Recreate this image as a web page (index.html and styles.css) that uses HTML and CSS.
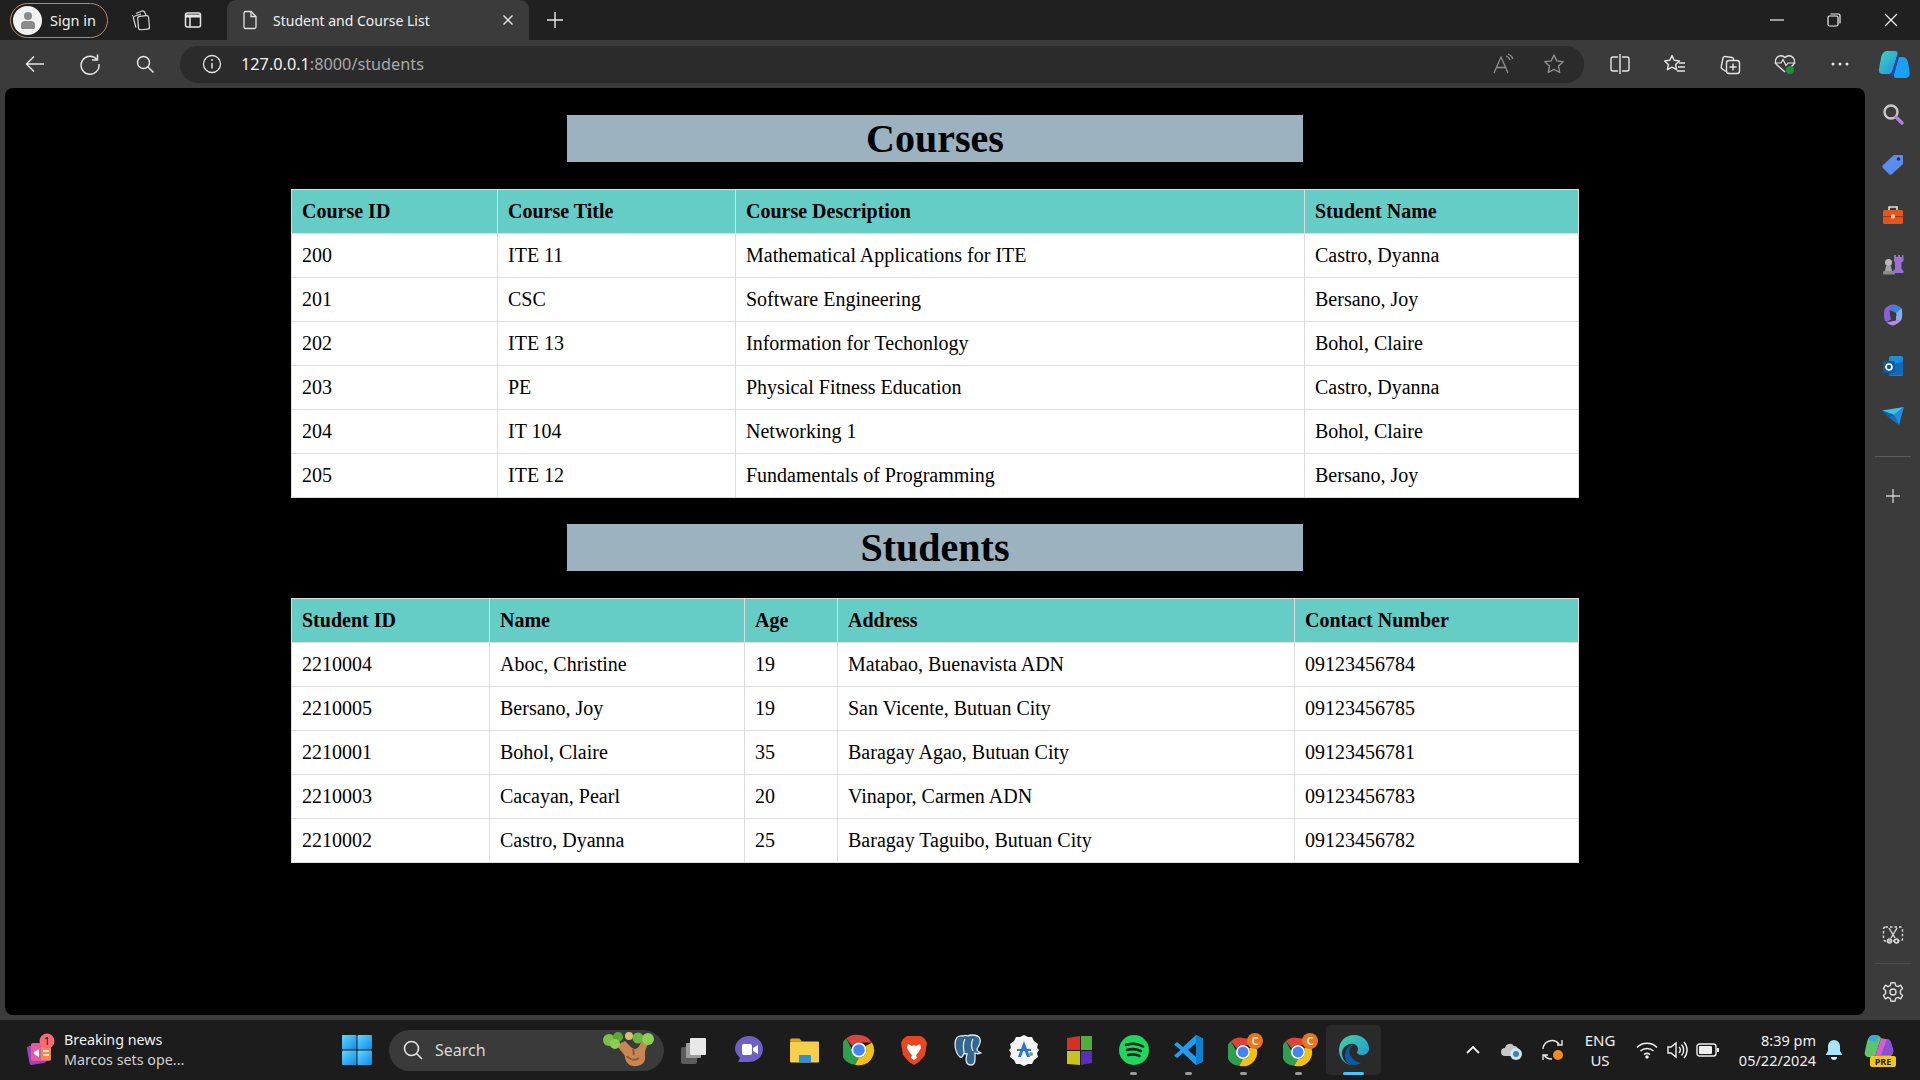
FILE: index.html
```html
<!DOCTYPE html>
<html>
<head>
  <meta charset="UTF-8">
  <title>Student and Course List</title>
  <link rel="stylesheet" href="styles.css">
</head>
<body>

  <svg class="defs" width="0" height="0">
    <symbol id="chrome" viewBox="0 0 32 32">
      <path d="M16 1a15 15 0 0 1 13 7.500H16a7.500 7.500 0 0 0-6.500 3.750L3 4.500A15 15 0 0 1 16 1z" fill="#db4437"/>
      <path d="M3 4.500l6.500 11.250a7.500 7.500 0 0 0 6.500 7.750L12 30.700A15 15 0 0 1 3 4.500z" fill="#2f9e4f"/>
      <path d="M29 8.500A15 15 0 0 1 12 30.700l4-7.200a7.500 7.500 0 0 0 6.500-11.250z" fill="#f4c20d"/>
      <circle cx="16" cy="16" r="7.500" fill="#fff"/>
      <circle cx="16" cy="16" r="5.800" fill="#4285f4"/>
    </symbol>
  </svg>

  <div class="tabstrip">
    <div class="signin">
      <span class="avatar">
        <svg width="24" height="24" viewBox="0 0 24 24"><circle cx="12" cy="8" r="4" fill="#8a8a8a"/><path d="M5 20v-3a4 4 0 0 1 4-4h6a4 4 0 0 1 4 4v3a2 2 0 0 1-2 1H7a2 2 0 0 1-2-1z" fill="#8a8a8a"/></svg>
      </span>
      <span>Sign in</span>
    </div>
    <div class="strip-btn">
      <svg width="22" height="22" viewBox="0 0 22 22" fill="none" stroke="#d8d8d8" stroke-width="1.200"><rect x="8" y="7" width="11" height="13.500" rx="2" transform="rotate(-5 13 13)"/><path d="M6 18.500L3.500 9.500a2 2 0 0 1 1.500-2.500l6-2"/><path d="M3 6.500L2 7"/><path d="M6 4.500l6-2.500a2 2 0 0 1 2.500 1l1.500 3"/></svg>
    </div>
    <div class="strip-btn">
      <svg width="20" height="20" viewBox="0 0 20 20" fill="none" stroke="#e6e6e6" stroke-width="1.500"><rect x="2.500" y="3" width="15" height="14" rx="2"/><path d="M2.500 6h15" stroke-width="3"/><path d="M7 7v10"/></svg>
    </div>
    <div class="tab">
      <svg width="18" height="20" viewBox="0 0 18 20" fill="none" stroke="#e0e0e0" stroke-width="1.300"><path d="M3 3a1.500 1.500 0 0 1 1.500-1.500H10L15 6.500V17a1.500 1.500 0 0 1-1.500 1.500h-9A1.500 1.500 0 0 1 3 17z"/><path d="M10 1.500V6.500H15"/></svg>
      <span class="tab-title">Student and Course List</span>
      <svg class="tab-close" width="12" height="12" viewBox="0 0 12 12" stroke="#e8e8e8" stroke-width="1.400"><path d="M1.500 1.500l9 9M10.500 1.500l-9 9"/></svg>
    </div>
    <div class="strip-btn">
      <svg width="20" height="20" viewBox="0 0 20 20" stroke="#e8e8e8" stroke-width="1.400"><path d="M10 2v16M2 10h16"/></svg>
    </div>
    <div class="win-btns">
      <div class="win-btn"><svg width="14" height="14" viewBox="0 0 14 14" stroke="#f0f0f0" stroke-width="1.200"><path d="M0 7h14"/></svg></div>
      <div class="win-btn"><svg width="14" height="14" viewBox="0 0 14 14" fill="none" stroke="#f0f0f0" stroke-width="1.200"><rect x="1" y="3" width="10" height="10" rx="1.500"/><path d="M3.500 1h8a1.500 1.500 0 0 1 1.500 1.500v8"/></svg></div>
      <div class="win-btn"><svg width="14" height="14" viewBox="0 0 14 14" stroke="#f0f0f0" stroke-width="1.200"><path d="M1 1l12 12M13 1L1 13"/></svg></div>
    </div>
  </div>

  <div class="toolbar">
    <div class="tool">
      <svg width="22" height="22" viewBox="0 0 22 22" fill="none" stroke="#e4e4e4" stroke-width="1.500"><path d="M20 11H2.500M10 3.500L2.500 11l7.500 7.500"/></svg>
    </div>
    <div class="tool">
      <svg width="22" height="22" viewBox="0 0 22 22" fill="none" stroke="#e4e4e4" stroke-width="1.500"><path d="M18 6.500A9 9 0 1 0 20 11"/><path d="M18.500 1.500v5.500h-5.500"/></svg>
    </div>
    <div class="tool">
      <svg width="20" height="20" viewBox="0 0 20 20" fill="none" stroke="#e4e4e4" stroke-width="1.500"><circle cx="8.500" cy="8.500" r="6"/><path d="M13 13l5.500 5.500"/></svg>
    </div>
    <div class="address">
      <svg width="20" height="20" viewBox="0 0 20 20" fill="none" stroke="#e4e4e4" stroke-width="1.300"><circle cx="10" cy="10" r="8.500"/><path d="M10 9v5.500" stroke-width="1.500"/><circle cx="10" cy="6" r="1" fill="#e4e4e4" stroke="none"/></svg>
      <span class="url"><span class="url-host">127.0.0.1</span>:8000/students</span>
      <svg class="read-icon" width="24" height="22" viewBox="0 0 24 22" fill="none" stroke="#8f8f8f" stroke-width="1.300"><path d="M2 20L9 4l7 16M4.500 14.500h9"/><path d="M14 3a6 6 0 0 1 4 4M16 1a9 9 0 0 1 5 5"/></svg>
      <svg class="star-icon" width="22" height="22" viewBox="0 0 22 22" fill="none" stroke="#8f8f8f" stroke-width="1.400"><path d="M11 2l2.800 5.900 6.400.8-4.700 4.400 1.200 6.400L11 16.300l-5.700 3.200 1.200-6.400L1.800 8.700l6.400-.8z" stroke-linejoin="round"/></svg>
    </div>
    <div class="tool tool-first">
      <svg width="22" height="22" viewBox="0 0 22 22" fill="none" stroke="#e4e4e4" stroke-width="1.400"><path d="M9 4H4a2 2 0 0 0-2 2v10a2 2 0 0 0 2 2h5M13 4h5a2 2 0 0 1 2 2v10a2 2 0 0 1-2 2h-5"/><path d="M11 1v20"/></svg>
    </div>
    <div class="tool">
      <svg width="24" height="22" viewBox="0 0 24 22" fill="none" stroke="#e4e4e4" stroke-width="1.400"><path d="M9 2.500l2.200 4.700 5.200.7-3.800 3.600 1 5.200L9 14.100l-4.600 2.600 1-5.200L1.600 7.900l5.200-.7z" stroke-linejoin="round"/><path d="M16 10h6M15 14h7M14 18h8"/></svg>
    </div>
    <div class="tool">
      <svg width="22" height="22" viewBox="0 0 22 22" fill="none" stroke="#e4e4e4" stroke-width="1.400"><path d="M7 18.500L3.500 16a2 2 0 0 1-1.200-2.500L4 5a2 2 0 0 1 2.400-1.500L13 4.500a2 2 0 0 1 1.500 1.500v1"/><rect x="7.500" y="7.500" width="13" height="13" rx="2.500"/><path d="M14 10.500v7M10.500 14h7"/></svg>
    </div>
    <div class="tool">
      <svg width="24" height="22" viewBox="0 0 24 22" fill="none"><path d="M12 19L4 12a5.500 5.500 0 0 1 0-7.500 5.300 5.300 0 0 1 8 0 5.300 5.300 0 0 1 8 0 5.500 5.500 0 0 1 0 7.500l-3 3" stroke="#e4e4e4" stroke-width="1.400"/><path d="M1.500 10H8l2-3.500 3 6 2-2.500h7.500" stroke="#e4e4e4" stroke-width="1.200"/><circle cx="17" cy="17" r="4" fill="#1f8f3d"/></svg>
    </div>
    <div class="tool">
      <svg width="18" height="6" viewBox="0 0 18 6" fill="#e8e8e8"><circle cx="2" cy="3" r="1.500"/><circle cx="9" cy="3" r="1.500"/><circle cx="16" cy="3" r="1.500"/></svg>
    </div>
    <div class="tool tool-last">
      <svg width="32" height="29" viewBox="0 0 32 29">
        <defs><linearGradient id="copleft" x1="0" y1="0" x2="1" y2="1"><stop offset="0" stop-color="#3fd6b8"/><stop offset="1" stop-color="#1e8fe8"/></linearGradient></defs>
        <path d="M18 28h9c3 0 5-2 4.700-5l-1.500-10c-.4-3-2.500-6-5.700-6h-3.500L16 24c-.6 2 .4 4 2 4z" fill="#1aa0f5"/>
        <path d="M9 1h8c2 0 3 1.500 2.500 3.500L14 22c-.5 1.500-2 2-3.500 2H5c-3 0-4.500-2-4-5l2-11c.7-4 3-7 6-7z" fill="url(#copleft)"/>
        <path d="M19.500 4.500L14 22c-.4 1.200-1.200 1.800-2.200 2l5 3c-.9-.8-1.200-1.800-.8-3l4.500-17c.2-.8-.4-1.800-1-2.500z" fill="#1c47b8"/>
      </svg>
    </div>
  </div>

  <div class="frame">
    <main class="page">
      <h2 class="bar-title">Courses</h2>
      <table class="data-table">
        <colgroup>
          <col class="c-id"><col class="c-title"><col class="c-desc"><col>
        </colgroup>
        <thead>
          <tr><th>Course ID</th><th>Course Title</th><th>Course Description</th><th>Student Name</th></tr>
        </thead>
        <tbody>
          <tr><td>200</td><td>ITE 11</td><td>Mathematical Applications for ITE</td><td>Castro, Dyanna</td></tr>
          <tr><td>201</td><td>CSC</td><td>Software Engineering</td><td>Bersano, Joy</td></tr>
          <tr><td>202</td><td>ITE 13</td><td>Information for Techonlogy</td><td>Bohol, Claire</td></tr>
          <tr><td>203</td><td>PE</td><td>Physical Fitness Education</td><td>Castro, Dyanna</td></tr>
          <tr><td>204</td><td>IT 104</td><td>Networking 1</td><td>Bohol, Claire</td></tr>
          <tr><td>205</td><td>ITE 12</td><td>Fundamentals of Programming</td><td>Bersano, Joy</td></tr>
        </tbody>
      </table>

      <h2 class="bar-title">Students</h2>
      <table class="data-table">
        <colgroup>
          <col class="s-id"><col class="s-name"><col class="s-age"><col class="s-addr"><col>
        </colgroup>
        <thead>
          <tr><th>Student ID</th><th>Name</th><th>Age</th><th>Address</th><th>Contact Number</th></tr>
        </thead>
        <tbody>
          <tr><td>2210004</td><td>Aboc, Christine</td><td>19</td><td>Matabao, Buenavista ADN</td><td>09123456784</td></tr>
          <tr><td>2210005</td><td>Bersano, Joy</td><td>19</td><td>San Vicente, Butuan City</td><td>09123456785</td></tr>
          <tr><td>2210001</td><td>Bohol, Claire</td><td>35</td><td>Baragay Agao, Butuan City</td><td>09123456781</td></tr>
          <tr><td>2210003</td><td>Cacayan, Pearl</td><td>20</td><td>Vinapor, Carmen ADN</td><td>09123456783</td></tr>
          <tr><td>2210002</td><td>Castro, Dyanna</td><td>25</td><td>Baragay Taguibo, Butuan City</td><td>09123456782</td></tr>
        </tbody>
      </table>
    </main>

    <aside class="sidebar">
      <div class="side-item">
        <svg width="24" height="24" viewBox="0 0 24 24" fill="none"><circle cx="10" cy="10" r="6.500" stroke="#c9c9c9" stroke-width="2.400"/><path d="M15 15l6 6" stroke="#b57fd6" stroke-width="3.500" stroke-linecap="round"/></svg>
      </div>
      <div class="side-item">
        <svg width="24" height="24" viewBox="0 0 24 24"><path d="M13 3h8a1 1 0 0 1 1 1v8L11 22a2 2 0 0 1-3 0l-6-6a2 2 0 0 1 0-3z" fill="#5b8def"/><circle cx="17.500" cy="7" r="1.800" fill="#17306b"/></svg>
      </div>
      <div class="side-item">
        <svg width="24" height="22" viewBox="0 0 24 22"><path d="M8 6V3h8v3" fill="none" stroke="#e2e2e2" stroke-width="1.600"/><rect x="2" y="6" width="20" height="14" rx="1.500" fill="#e2571e"/><rect x="2" y="12" width="20" height="1.200" fill="#a83a10"/><rect x="10" y="10.500" width="4" height="4" rx="1" fill="#f6c1a6"/></svg>
      </div>
      <div class="side-item">
        <svg width="24" height="24" viewBox="0 0 24 24"><circle cx="7.500" cy="9.500" r="3.500" fill="#b9b9b9"/><path d="M5 13h5l1 5H4z" fill="#a5a5a5"/><rect x="2" y="18" width="12" height="3.500" rx="1" fill="#8a8a8a"/><path d="M13 2h2v2h2V2h2v2h2V2h1.500v6L20.500 9.500V16l2 2v2H12v-2l2-2V9.500L13 8z" fill="#9a6fd6"/></svg>
      </div>
      <div class="side-item">
        <svg width="24" height="24" viewBox="0 0 24 24"><path d="M12 1.500c3 0 7 2 8.500 4 .8 1.200-.5 3-2 3.500l-3 1-7-3z" fill="#3f7fe0"/><path d="M20.500 5.500c1 3 1 8 0 11-.5 1.500-2.500 1-3.500.5l-2 1 .2-8z" fill="#7fb0ee"/><path d="M20.500 16.500c-2 3-6 5.500-8.500 6-2 0-5-1.500-6.500-3l9.500-2z" fill="#b68ae6"/><path d="M3.500 6.500c2-3 5-5 8.500-5L8.500 7.500l1.500 9-4.500 2.500c-2-1-2.500-3-2.500-6 0-3 0-5 .5-6.500z" fill="#8a5fd6"/><path d="M9 8l7 4-6 4z" fill="#3b3b3b"/></svg>
      </div>
      <div class="side-item">
        <svg width="24" height="24" viewBox="0 0 24 24"><rect x="8" y="2" width="14" height="20" rx="1.500" fill="#1a8fdc"/><path d="M8 12l14-5v13a1.500 1.500 0 0 1-1.500 1.500H9.500A1.500 1.500 0 0 1 8 20z" fill="#0f6cbd"/><rect x="2" y="7" width="12" height="12" rx="1.500" fill="#0a5aa5"/><circle cx="8" cy="13" r="3" fill="none" stroke="#fff" stroke-width="1.700"/></svg>
      </div>
      <div class="side-item">
        <svg width="24" height="20" viewBox="0 0 24 20"><path d="M1 4.500L23 1 13 9z" fill="#38c3e8"/><path d="M23 1l-5 18-5-10z" fill="#1f8ee0"/><path d="M13 9l5 10-11-8z" fill="#126fc2"/><path d="M1 4.500L13 9l-6 2z" fill="#0e5fa8"/></svg>
      </div>
      <div class="side-rule"></div>
      <div class="side-item side-plus">
        <svg width="16" height="16" viewBox="0 0 16 16" stroke="#cfcfcf" stroke-width="1.300"><path d="M8 1v14M1 8h14"/></svg>
      </div>
      <div class="side-bottom">
        <div class="side-item">
          <svg width="22" height="22" viewBox="0 0 22 22" fill="none" stroke="#dcdcdc" stroke-width="1.400"><rect x="1.500" y="3" width="19" height="14" rx="2" stroke-dasharray="2.500 2"/><path d="M7 4l6 10M15 4L9 14"/><circle cx="7.500" cy="17" r="2"/><circle cx="14.500" cy="17" r="2"/></svg>
        </div>
        <div class="side-rule side-rule-faint"></div>
        <div class="side-item">
          <svg width="22" height="22" viewBox="0 0 22 22" fill="none" stroke="#dcdcdc" stroke-width="1.400"><circle cx="11" cy="11" r="3"/><path d="M9 1.800h4l.7 2.900 2.300 1 2.600-1.500 2 3.400-2.200 2v2.800l2.200 2-2 3.400-2.600-1.500-2.300 1-.7 2.900H9l-.7-2.900-2.300-1-2.600 1.500-2-3.400 2.200-2V9.600l-2.200-2 2-3.400L6 5.700l2.300-1z" stroke-linejoin="round"/></svg>
        </div>
      </div>
    </aside>
  </div>

  <footer class="taskbar">
    <div class="news">
      <svg class="news-icon" width="34" height="34" viewBox="0 0 34 34">
        <rect x="3" y="12" width="17" height="19" rx="2" fill="#a03fc4" transform="rotate(-10 11 21)"/>
        <rect x="6" y="10" width="20" height="18" rx="2" fill="#e8589a"/>
        <rect x="16" y="14" width="10" height="13" fill="#f08a4b"/>
        <path d="M9 19l5-3v8l-5-3z" fill="#fff"/>
        <path d="M18 18h6M18 22h6" stroke="#fff" stroke-width="1.500"/>
        <circle cx="22" cy="8" r="7.500" fill="#f56a79"/>
        <text x="22" y="12" class="news-badge" text-anchor="middle">1</text>
      </svg>
      <div class="news-text">
        <div class="news-head">Breaking news</div>
        <div class="news-sub">Marcos sets ope...</div>
      </div>
    </div>

    <div class="start">
      <svg width="30" height="30" viewBox="0 0 30 30"><defs><linearGradient id="winfill" x1="0" y1="0" x2="1" y2="1"><stop offset="0" stop-color="#5fd8ff"/><stop offset="1" stop-color="#1489e6"/></linearGradient></defs><rect x="0" y="0" width="14.500" height="14.500" rx="1" fill="url(#winfill)"/><rect x="15.500" y="0" width="14.500" height="14.500" rx="1" fill="url(#winfill)"/><rect x="0" y="15.500" width="14.500" height="14.500" rx="1" fill="url(#winfill)"/><rect x="15.500" y="15.500" width="14.500" height="14.500" rx="1" fill="url(#winfill)"/></svg>
    </div>

    <div class="search-box">
      <svg width="22" height="22" viewBox="0 0 22 22" fill="none" stroke="#e4e4e4" stroke-width="1.600"><circle cx="9.500" cy="9.500" r="7"/><path d="M14.500 14.500l5.500 5.500"/></svg>
      <span class="search-label">Search</span>
      <svg class="search-art" width="56" height="36" viewBox="0 0 56 36">
        <path d="M17 13c3 6 7 8 8 12 .5 6 5 10 12 9 6-1 9-5 8-10-.5-5 1-9 4-13l-7-3c-2 5-4 9-7 9-3 0-6-4-10-8z" fill="#c98652"/>
        <path d="M27 24c3 4 8 5 12 2M33 17l1 6" fill="none" stroke="#8d5a33" stroke-width="2"/>
        <circle cx="9" cy="8" r="6" fill="#7cc04a"/><circle cx="18" cy="5" r="5" fill="#5fa63a"/><circle cx="15" cy="12" r="5" fill="#8ccf55"/>
        <circle cx="38" cy="6" r="5.500" fill="#6cb644"/><circle cx="48" cy="7" r="6" fill="#8ccf55"/><circle cx="29" cy="4" r="4" fill="#d8c16a"/>
      </svg>
    </div>

    <div class="apps">
      <div class="app">
        <svg width="32" height="32" viewBox="0 0 32 32"><rect x="3" y="13" width="16" height="17" rx="2" fill="#5c5c5c"/><rect x="8" y="9" width="15" height="15" rx="1" fill="#9c9c9c"/><rect x="12" y="4" width="16" height="17" rx="1" fill="#e8e8e8"/></svg>
      </div>
      <div class="app">
        <svg width="32" height="32" viewBox="0 0 32 32"><path d="M16 2c8 0 14 6 14 13s-6 13-14 13H5l2-4C4 21 2 18 2 15 2 8 8 2 16 2z" fill="#6d5fc7"/><rect x="9" y="10" width="10" height="11" rx="2" fill="#fff"/><path d="M20 14l5-3v9l-5-3z" fill="#fff"/></svg>
      </div>
      <div class="app">
        <svg width="32" height="32" viewBox="0 0 32 32"><path d="M2 6a1.500 1.500 0 0 1 1.500-1.500h8L14 7.500H2z" fill="#d8a51e"/><rect x="2" y="7.500" width="29" height="21" rx="1" fill="#f6cf4d"/><rect x="11" y="21" width="12" height="7.500" rx="1" fill="#2c8fd8"/></svg>
      </div>
      <div class="app"><svg width="32" height="32"><use href="#chrome"/></svg></div>
      <div class="app">
        <svg width="30" height="32" viewBox="0 0 30 32"><path d="M8 2h14l4 3 2 4-2 12-6 7-5 3-5-3-6-7L2 9l2-4z" fill="#e8461f"/><path d="M9 10l4 2 2-1 2 1 4-2 1 4-3 5-2 2 1 3-3 2-3-2 1-3-2-2-3-5z" fill="#fff"/></svg>
      </div>
      <div class="app">
        <svg width="32" height="32" viewBox="0 0 32 32" fill="#336791" stroke="#dfe8ef" stroke-width="1.300"><path d="M10 2C5 1 2 4 2 10c0 5 2 11 5 13 2 1 3-1 4-4 1 1 2 1 3 1l-1 5c0 4 2 6 5 6s4-2 4-6v-6c2 1 4 1 6 0-2-1-4-1-4-4 2-3 4-7 3-10-1-3-4-4-8-4-2 0-3 0-4 1-2-1-3-1-5 0z"/><path d="M12 5c-2 4-2 8-1 13M20 5c-2 4-2 8 0 12" fill="none"/></svg>
      </div>
      <div class="app">
        <svg width="32" height="32" viewBox="0 0 32 32"><path d="M16 1l4 2 4 0 2 4 4 3-1 4 2 2-2 3 1 4-4 3-2 4h-4l-4 2-4-2H8l-2-4-4-3 1-4-2-3 2-2-1-4 4-3 2-4h4z" fill="#f4f4f4"/><path d="M16 7l6 16h-3l-3-8-3 8h-3z" fill="#2f6fd0"/><path d="M9 16h14" stroke="#2f6fd0" stroke-width="2"/><circle cx="23" cy="20" r="2" fill="#53b45c"/></svg>
      </div>
      <div class="app">
        <svg width="30" height="32" viewBox="0 0 30 32"><path d="M3 4l13-2v14H3z" fill="#d2321f"/><path d="M17 2l11 0v14H17z" fill="#4eb03a"/><path d="M3 17h13v14l-13-1z" fill="#c7c21f"/><path d="M17 17h11v12l-11 2z" fill="#5b2db8"/></svg>
      </div>
      <div class="app app-run">
        <svg width="32" height="32" viewBox="0 0 32 32"><circle cx="16" cy="16" r="15" fill="#1ed760"/><path d="M8 11c6-2 12-1.500 17 1.500M9 16c5-1.500 10-1 14 1.200M10 21c4-1 8-.7 11.500 1" fill="none" stroke="#14261a" stroke-width="2.600" stroke-linecap="round"/></svg>
      </div>
      <div class="app app-run">
        <svg width="32" height="32" viewBox="0 0 32 32"><path d="M23 1l7 3.500v23L23 31 10 19l-6 5-3-2.500L7.500 16 1 10.500 4 8l6 5z" fill="#1f9cf0"/><path d="M23 9l-8 7 8 7z" fill="#1c1c1c"/><path d="M23 1l7 3.500v23L23 31z" fill="#0f7fcf"/></svg>
      </div>
      <div class="app app-run">
        <svg class="chrome-badged" width="36" height="36" viewBox="0 0 36 36"><use href="#chrome" x="0" y="5" width="30" height="30"/><circle cx="27" cy="9" r="8" fill="#e8761e"/><text x="27" y="13" class="app-badge" text-anchor="middle">C</text></svg>
      </div>
      <div class="app app-run">
        <svg class="chrome-badged" width="36" height="36" viewBox="0 0 36 36"><use href="#chrome" x="0" y="5" width="30" height="30"/><circle cx="27" cy="9" r="8" fill="#e8761e"/><text x="27" y="13" class="app-badge" text-anchor="middle">C</text></svg>
      </div>
      <div class="app app-active">
        <svg width="32" height="32" viewBox="0 0 32 32"><defs><linearGradient id="edgefill" x1="0" y1="0" x2="1" y2="1"><stop offset="0" stop-color="#43d3a0"/><stop offset="1" stop-color="#1a8fe0"/></linearGradient></defs><path d="M16 1c8.500 0 15 6 15 13.500 0 4-3 6.500-7 6.500-3 0-5-1-5-2.500 0-1 1-1.500 1-3.500 0-4-4-6-8-5-5 1.200-8 5-8 9.500 0 6 5 11.500 11 11.500C6.500 31 1 24 1 16 1 7.500 7.500 1 16 1z" fill="url(#edgefill)"/><path d="M7 20.500C8 14 12 11 16 10.500c-5 3-6 7-3 12 2 3.500 6 6 10 6.500-2 1.300-4.500 2-7 2C10 31 6.500 26 7 20.500z" fill="#0c59a4"/></svg>
      </div>
    </div>

    <div class="tray">
      <div class="tray-item t-chevron"><svg width="16" height="10" viewBox="0 0 16 10" fill="none" stroke="#f0f0f0" stroke-width="1.800"><path d="M2 8l6-6 6 6"/></svg></div>
      <div class="tray-item t-cloud"><svg width="24" height="22" viewBox="0 0 24 22"><path d="M5 17a4 4 0 0 1 0-8 5 5 0 0 1 9-2 4 4 0 0 1 4 4l-4 6z" fill="#c6c6c6"/><circle cx="16" cy="15" r="6" fill="#cfe6f5"/><circle cx="16" cy="15" r="3" fill="#3f7fb5"/></svg></div>
      <div class="tray-item t-sync"><svg width="26" height="26" viewBox="0 0 26 26" fill="none" stroke="#e8e8e8" stroke-width="1.400"><path d="M3 12a9 9 0 0 1 16-5M22 3v5h-5"/><path d="M3 23v-5h5M4 18a9 9 0 0 0 8 4"/><circle cx="18" cy="18" r="5" fill="#f28c1e" stroke="none"/></svg></div>
      <div class="tray-item t-lang"><span>ENG</span><span>US</span></div>
      <div class="tray-item t-wifi"><svg width="22" height="18" viewBox="0 0 22 18" fill="none" stroke="#f0f0f0" stroke-width="1.500"><path d="M1 6.500a14 14 0 0 1 20 0M4.500 10a9.500 9.500 0 0 1 13 0M8 13.500a5 5 0 0 1 6 0"/><circle cx="11" cy="16" r="1" fill="#f0f0f0"/></svg></div>
      <div class="tray-item t-sound"><svg width="22" height="20" viewBox="0 0 22 20" fill="none" stroke="#f0f0f0" stroke-width="1.400"><path d="M2 7v6h3l5 4V3L5 7z"/><path d="M13 7a4 4 0 0 1 0 6M15.500 4.500a8 8 0 0 1 0 11M18 2a12 12 0 0 1 0 16"/></svg></div>
      <div class="tray-item t-battery"><svg width="24" height="14" viewBox="0 0 24 14"><rect x="1" y="1" width="19" height="12" rx="2.500" fill="none" stroke="#f0f0f0" stroke-width="1.400"/><rect x="3" y="3" width="13" height="8" rx="1" fill="#f0f0f0"/><rect x="21" y="5" width="2" height="4" fill="#f0f0f0"/></svg></div>
      <div class="tray-item t-clock"><span>8:39 pm</span><span>05/22/2024</span></div>
      <div class="tray-item t-bell"><svg width="20" height="22" viewBox="0 0 20 22"><path d="M10 1a6 6 0 0 1 6 6v5l2.500 4h-17L4 12V7a6 6 0 0 1 6-6z" fill="#a8e4fb"/><path d="M7 18h6a3 3 0 0 1-6 0z" fill="#dff5fd"/></svg></div>
      <div class="tray-item t-pre">
        <svg width="34" height="34" viewBox="0 0 34 34"><path d="M11 2c-4 0-6 3-7 7L2 18c-1 4 1 6 4 6h6L18 5c-1-2-3-3-7-3z" fill="#5cc46a"/><path d="M11 2c-3 0-5 2-6 5l7 2 4-6c-1-1-3-1-5-1z" fill="#35a9e8"/><path d="M18 5l-6 19h12c4 0 7-3 6-7l-2-7c-1-3-3-4-6-4z" fill="#d55fd0"/><path d="M24 6l-6 16h8c4 0 5-3 4-6l-2-7c-1-2-2-3-4-3z" fill="#8a4fd8"/><rect x="7" y="23" width="26" height="11" rx="2" fill="#f5c518"/><text x="20" y="32" class="pre-label" text-anchor="middle">PRE</text></svg>
      </div>
    </div>
  </footer>

</body>
</html>
```

FILE: styles.css
```css
html, body {
  margin: 0;
  height: 100%;
}

body {
  width: 1920px;
  height: 1080px;
  overflow: hidden;
  display: flex;
  flex-direction: column;
  background-color: #3b3b3b;
  font-family: "Noto Sans", "Open Sans", sans-serif;
  color: #f0f0f0;
}

.defs {
  position: absolute;
}

/* tab strip */
.tabstrip {
  height: 40px;
  flex: none;
  display: flex;
  align-items: center;
  padding-left: 10px;
  background-color: #202020;
}

.signin {
  width: 98px;
  height: 35px;
  box-sizing: border-box;
  display: flex;
  align-items: center;
  gap: 8px;
  padding-left: 2px;
  border: 1.500px solid #b58a6a;
  border-radius: 18px;
  font-size: 14.500px;
}

.avatar {
  width: 29px;
  height: 29px;
  border-radius: 50%;
  background-color: #f2f2f2;
  display: flex;
  align-items: center;
  justify-content: center;
}

.strip-btn {
  width: 52px;
  height: 40px;
  display: flex;
  align-items: center;
  justify-content: center;
}

.strip-btn:nth-child(2) {
  margin-left: 7px;
}

.tab {
  width: 302px;
  height: 40px;
  margin-left: 8px;
  box-sizing: border-box;
  display: flex;
  align-items: center;
  padding: 0 15px 0 14px;
  background-color: #3b3b3b;
  border-radius: 9px 9px 0 0;
}

.tab-title {
  margin-left: 14px;
  font-size: 14px;
  flex: 1;
}

.win-btns {
  margin-left: auto;
  height: 40px;
  display: flex;
}

.win-btn {
  width: 57px;
  display: flex;
  align-items: center;
  justify-content: center;
}

.win-btn:last-child {
  width: 58px;
}

/* toolbar */
.toolbar {
  height: 48px;
  flex: none;
  display: flex;
  align-items: center;
  padding-left: 7px;
  background-color: #3b3b3b;
}

.tool {
  width: 55px;
  height: 36px;
  flex: none;
  display: flex;
  align-items: center;
  justify-content: center;
}

.tool-last {
  width: 53px;
}

.address {
  width: 1404px;
  height: 37px;
  margin-left: 8px;
  flex: none;
  box-sizing: border-box;
  display: flex;
  align-items: center;
  padding-left: 22px;
  background-color: #2b2b2b;
  border-radius: 18px;
}

.tool-first {
  margin-left: 8px;
}

.url {
  margin-left: 19px;
  flex: 1;
  font-size: 16.250px;
  color: #a8a8a8;
}

.url-host {
  color: #f2f2f2;
}

.read-icon {
  margin-right: 27px;
}

.star-icon {
  margin-right: 19px;
}

/* page area */
.frame {
  flex: 1;
  min-height: 0;
  display: flex;
}

.page {
  flex: 1;
  margin: 0 0 5px 5px;
  padding-top: 27px;
  box-sizing: border-box;
  display: flex;
  flex-direction: column;
  align-items: center;
  background-color: #000;
  border-radius: 8px;
  font-family: "Liberation Serif", "Times New Roman", serif;
}

.bar-title {
  width: 736px;
  height: 47px;
  margin: 0 0 27px;
  background-color: #9cb2bf;
  color: #000;
  font-size: 40px;
  line-height: 47px;
  font-weight: bold;
  text-align: center;
}

.data-table {
  width: 1288px;
  margin-bottom: 26px;
  table-layout: fixed;
  border-collapse: collapse;
  background-color: #fff;
  color: #000;
  font-size: 20px;
  line-height: 23px;
}

.data-table th,
.data-table td {
  padding: 10px;
  border: 1px solid #ddd;
  text-align: left;
}

.data-table th {
  background-color: #66ccc6;
  font-weight: bold;
}

.c-id { width: 206px; }
.c-title { width: 238px; }
.c-desc { width: 569px; }

.s-id { width: 198px; }
.s-name { width: 255px; }
.s-age { width: 93px; }
.s-addr { width: 457px; }

/* edge sidebar */
.sidebar {
  width: 55px;
  flex: none;
  display: flex;
  flex-direction: column;
  align-items: center;
  padding-top: 1px;
  padding-bottom: 3px;
  box-sizing: border-box;
}

.side-item {
  width: 55px;
  height: 50.300px;
  display: flex;
  align-items: center;
  justify-content: center;
}

.side-rule {
  width: 36px;
  height: 1px;
  margin-top: 15px;
  background-color: #5c5c5c;
}

.side-plus {
  margin-top: 14px;
}

.side-bottom {
  margin-top: auto;
  display: flex;
  flex-direction: column;
  align-items: center;
}

.side-rule-faint {
  margin: 3px 0;
  background-color: #4c4c4c;
}

/* windows taskbar */
.taskbar {
  height: 60px;
  flex: none;
  display: flex;
  align-items: center;
  background-color: #1c1c1c;
}

.news {
  width: 340px;
  flex: none;
  display: flex;
  align-items: center;
  padding-left: 25px;
  box-sizing: border-box;
}

.news-text {
  margin-left: 5px;
  font-size: 14.300px;
  line-height: 20px;
}

.news-sub {
  color: #d0d0d0;
}

.news-badge {
  font-family: "Noto Sans", sans-serif;
  font-size: 11px;
  fill: #1c1c1c;
}

.start {
  width: 34px;
  flex: none;
  display: flex;
  justify-content: center;
}

.search-box {
  width: 275px;
  height: 41px;
  margin-left: 15px;
  flex: none;
  box-sizing: border-box;
  display: flex;
  align-items: center;
  padding: 0 0 0 13px;
  background-color: #3a3a3a;
  border-radius: 21px;
}

.search-label {
  margin-left: 11px;
  flex: 1;
  font-size: 16px;
  color: #d8d8d8;
}

.search-art {
  margin-right: 8px;
}

.apps {
  margin-left: 2px;
  flex: none;
  display: flex;
}

.app {
  position: relative;
  width: 55px;
  height: 50px;
  display: flex;
  align-items: center;
  justify-content: center;
}

.chrome-badged {
  margin-left: 4px;
}

.app-run::after {
  content: "";
  position: absolute;
  left: 24px;
  bottom: 0;
  width: 7px;
  height: 3px;
  border-radius: 2px;
  background-color: #9a9a9a;
}

.app-active {
  background-color: #2a2a2a;
  border-radius: 5px;
}

.app-active::after {
  content: "";
  position: absolute;
  left: 17px;
  bottom: 0;
  width: 21px;
  height: 3px;
  border-radius: 2px;
  background-color: #4cc2ff;
}

.app-badge {
  font-family: "Noto Sans", sans-serif;
  font-size: 11px;
  font-weight: bold;
  fill: #fde6cf;
}

.pre-label {
  font-family: "Noto Sans", sans-serif;
  font-size: 9px;
  font-weight: bold;
  fill: #222;
}

.tray {
  margin-left: auto;
  padding-right: 12px;
  flex: none;
  display: flex;
  align-items: center;
}

.tray-item {
  flex: none;
  display: flex;
  align-items: center;
  justify-content: center;
}

.t-chevron { width: 40px; }
.t-cloud { width: 38px; }
.t-sync { width: 44px; }

.t-lang {
  width: 50px;
  flex-direction: column;
  font-size: 15px;
  line-height: 20px;
}

.t-wifi { width: 36px; margin-left: 4px; }
.t-sound { width: 24px; }
.t-battery { width: 38px; }

.t-clock {
  width: 89px;
  flex-direction: column;
  align-items: flex-end;
  font-size: 14.500px;
  line-height: 20px;
}

.t-bell { width: 36px; }
.t-pre { width: 56px; }
```
